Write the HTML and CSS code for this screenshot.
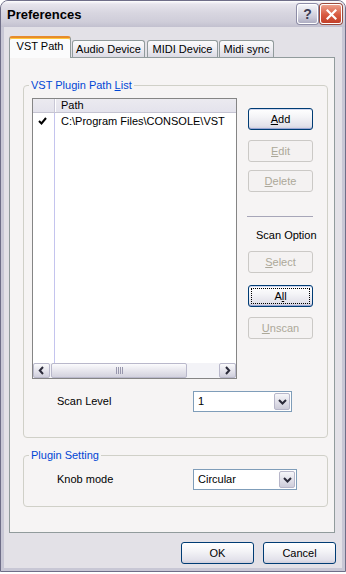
FILE: index.html
```html
<html>

<head>
  <meta charset="utf8">
  <title>Preferences</title>
  <link rel="stylesheet" href="styles.css">
</head>

<body>
  <div class="window">
    <div class="titlebar">
      <span class="title">Preferences</span>
      <span class="caption-btn help">?</span>
      <span class="caption-btn close">
        <svg width="11" height="11" viewBox="0 0 11 11"><path d="M1.5 1.5 L9.5 9.5 M9.5 1.5 L1.5 9.5" stroke="#fff" stroke-width="2.2" stroke-linecap="square"/></svg>
      </span>
    </div>

    <div class="client">
      <div class="tabs">
        <div class="tab active">VST Path</div>
        <div class="tab tab-audio">Audio Device</div>
        <div class="tab tab-midi">MIDI Device</div>
        <div class="tab tab-sync">Midi sync</div>
      </div>

      <div class="page">
        <fieldset class="group">
          <legend>VST Plugin Path <u>L</u>ist</legend>
          <div class="list-row">
            <div class="listview">
              <div class="list-header">
                <span class="col-check"></span>
                <span class="col-path">Path</span>
              </div>
              <div class="list-body">
                <span class="cell-check">
                  <svg width="9" height="8" viewBox="0 0 9 8"><path d="M1 4 L3.5 6.5 L8 1" fill="none" stroke="#000" stroke-width="2"/></svg>
                </span>
                <span class="cell-path">C:\Program Files\CONSOLE\VST</span>
              </div>
              <div class="hscroll">
                <span class="sb-btn">
                  <svg width="7" height="9" viewBox="0 0 7 9"><path d="M5 1 L1.8 4.5 L5 8" fill="none" stroke="#2b2b3a" stroke-width="2"/></svg>
                </span>
                <span class="sb-thumb"><span class="grip"></span></span>
                <span class="sb-track"></span>
                <span class="sb-btn">
                  <svg width="7" height="9" viewBox="0 0 7 9"><path d="M2 1 L5.2 4.5 L2 8" fill="none" stroke="#2b2b3a" stroke-width="2"/></svg>
                </span>
              </div>
            </div>

            <div class="side-buttons">
              <span class="btn default btn-add"><u>A</u>dd</span>
              <span class="btn disabled btn-edit"><u>E</u>dit</span>
              <span class="btn disabled btn-delete"><u>D</u>elete</span>
              <div class="separator"></div>
              <div class="scan-caption">Scan Option</div>
              <span class="btn disabled btn-select"><u>S</u>elect</span>
              <span class="btn default focus btn-all">A<u>l</u>l</span>
              <span class="btn disabled btn-unscan"><u>U</u>nscan</span>
            </div>
          </div>

          <div class="field-row scan-row">
            <span>Scan Level</span>
            <div class="combo combo-level">
              <span class="combo-text">1</span>
              <span class="combo-btn">
                <svg width="9" height="6" viewBox="0 0 9 6"><path d="M1 1 L4.5 4.5 L8 1" fill="none" stroke="#2b2b3a" stroke-width="2"/></svg>
              </span>
            </div>
          </div>
        </fieldset>

        <fieldset class="group plugin-group">
          <legend>Plugin Setting</legend>
          <div class="field-row">
            <span>Knob mode</span>
            <div class="combo combo-knob">
              <span class="combo-text">Circular</span>
              <span class="combo-btn">
                <svg width="9" height="6" viewBox="0 0 9 6"><path d="M1 1 L4.5 4.5 L8 1" fill="none" stroke="#2b2b3a" stroke-width="2"/></svg>
              </span>
            </div>
          </div>
        </fieldset>
      </div>

      <div class="dialog-buttons">
        <span class="btn">OK</span>
        <span class="btn">Cancel</span>
      </div>
    </div>
  </div>
</body>

</html>
```

FILE: styles.css
```css
body {
  margin: 0;
  background: #fff;
  font: 11px/13px "Liberation Sans", Arial, sans-serif;
  color: #000;
}

.window {
  width: 346px;
  height: 572px;
  box-sizing: border-box;
  display: flex;
  flex-direction: column;
  border: 1px solid #6f6e88;
  border-radius: 8px 8px 0 0;
  overflow: hidden;
  background: #c8c7d5;
}

/* caption */

.titlebar {
  flex: none;
  height: 26px;
  display: flex;
  align-items: center;
  padding: 0 3px 0 6px;
  background: linear-gradient(#ffffff 0, #e6e4ec 12%, #d8d6e0 45%, #cfcdd9 80%, #c2c0cf 100%);
}

.title {
  flex: 1;
  font: bold 13px "Liberation Sans", Arial, sans-serif;
  color: #000;
  padding-top: 1px;
}

.caption-btn {
  width: 21px;
  height: 20px;
  box-sizing: border-box;
  margin-left: 2px;
  border: 1px solid #fff;
  border-radius: 3px;
  display: flex;
  align-items: center;
  justify-content: center;
}

.help {
  background: linear-gradient(#f4f4f8, #c9c9d8 70%, #aeadc2);
  box-shadow: 0 0 0 1px #8d8ca6;
  font: bold 14px "Liberation Sans", Arial, sans-serif;
  color: #3d3c52;
}

.close {
  width: 22px;
  background: linear-gradient(#eca08c, #d85a40 55%, #c2402a);
  box-shadow: 0 0 0 1px #9a4a3c;
}

/* client area */

.client {
  flex: 1;
  margin: 0 3px 3px;
  padding: 9px 7px 0 5px;
  background: #e3e1e7;
}

.tabs {
  display: flex;
  align-items: flex-end;
  height: 21px;
}

.tab {
  height: 17px;
  box-sizing: border-box;
  border: 1px solid #919b9c;
  border-bottom: 0;
  border-radius: 3px 3px 0 0;
  background: linear-gradient(#fbfbfc, #eeedf2 50%, #dcdbe4);
  text-align: center;
  line-height: 17px;
}

.tab.active {
  position: relative;
  height: 22px;
  margin-bottom: -1px;
  width: 62px;
  border-top: 2px solid #e68b2c;
  box-shadow: inset 0 1px #ffc73c;
  background: #fbfbfc;
  line-height: 17px;
}

.tab-audio {
  width: 73px;
  margin-left: 1px;
}

.tab-midi {
  width: 71px;
  margin-left: 2px;
}

.tab-sync {
  width: 55px;
  margin-left: 1px;
}

.page {
  width: 326px;
  height: 476px;
  box-sizing: border-box;
  border: 1px solid #919b9c;
  padding: 21px 6px 0 13px;
  background: #f6f4f4;
}

/* group boxes */

.group {
  margin: 0;
  padding: 6px 8px 25px;
  border: 1px solid #d0d0c8;
  border-radius: 4px;
}

.group legend {
  padding: 0 2px;
  margin-left: -3px;
  color: #0046d5;
}

.plugin-group {
  margin-top: 11px;
  padding-top: 7px;
  padding-bottom: 16px;
}

.list-row {
  display: flex;
  align-items: flex-start;
}

/* list view */

.listview {
  width: 205px;
  height: 281px;
  box-sizing: border-box;
  border: 1px solid #858585;
  display: flex;
  flex-direction: column;
  background: #fff;
}

.list-header {
  flex: none;
  height: 14px;
  box-sizing: border-box;
  display: grid;
  grid-template-columns: 22px 1fr;
  border-bottom: 1px solid #c5c4d2;
  background: linear-gradient(#ebeaf0, #e4e3ec);
}

.col-check {
  border-right: 1px solid #c9c8d6;
  box-shadow: 1px 0 #fff;
}

.col-path {
  padding-left: 6px;
  line-height: 13px;
}

.list-body {
  flex: 1;
  display: grid;
  grid-template-columns: 22px 1fr;
  grid-auto-rows: 16px;
  align-content: start;
  background: linear-gradient(to right, #fff 21px, #c4c4ee 21px, #c4c4ee 22px, #fff 22px);
}

.cell-check {
  display: flex;
  align-items: center;
  padding-left: 5px;
}

.cell-path {
  padding-left: 6px;
  line-height: 16px;
}

.hscroll {
  flex: none;
  height: 15px;
  display: flex;
  background: #f3f3f7;
}

.sb-btn {
  width: 17px;
  box-sizing: border-box;
  border: 1px solid #b9b8cb;
  border-radius: 2px;
  background: linear-gradient(#fafafc, #dddce6 70%, #cfcedb);
  display: flex;
  align-items: center;
  justify-content: center;
}

.sb-thumb {
  width: 136px;
  margin-left: 1px;
  box-sizing: border-box;
  border: 1px solid #b9b8cb;
  border-radius: 2px;
  background: linear-gradient(#fbfbfd, #e3e2ea 60%, #d3d2de);
  display: flex;
  align-items: center;
  justify-content: center;
}

.grip {
  width: 7px;
  height: 7px;
  background: repeating-linear-gradient(to right, #9897ad 0, #9897ad 1px, transparent 1px, transparent 2px);
}

.sb-track {
  flex: 1;
}

/* buttons */

.btn {
  position: relative;
  display: flex;
  align-items: center;
  justify-content: center;
  width: 73px;
  height: 22px;
  box-sizing: border-box;
  border: 1px solid #003c74;
  border-radius: 3px;
  background: linear-gradient(#ffffff, #f4f4f7 40%, #e2e1ea 85%, #cfcedb);
}

.btn.default {
  box-shadow: inset 0 1px #cfd6ee, inset 0 -1px #9aa6d4;
}

.btn.focus::before {
  content: "";
  position: absolute;
  top: 2px;
  left: 2px;
  right: 2px;
  bottom: 2px;
  border: 1px dotted #000;
}

.btn.disabled {
  border-color: #cbc9c6;
  background: #f4f2f2;
  color: #aca899;
  box-shadow: none;
}

.side-buttons {
  margin-left: 11px;
  padding-top: 10px;
  width: 65px;
}

.side-buttons .btn {
  width: 65px;
}

.btn-edit {
  margin-top: 10px;
}

.btn-delete {
  margin-top: 8px;
}

.separator {
  margin: 24px 0 0 -1px;
  height: 1px;
  background: #a7a6b8;
}

.scan-caption {
  margin-top: 12px;
  padding-left: 8px;
  white-space: nowrap;
}

.btn-select {
  margin-top: 9px;
}

.btn-all {
  margin-top: 12px;
}

.btn-unscan {
  margin-top: 10px;
}

/* combo rows */

.field-row {
  display: grid;
  grid-template-columns: 136px auto;
  align-items: center;
  padding-left: 25px;
}

.scan-row {
  margin-top: 12px;
}

.combo {
  height: 21px;
  box-sizing: border-box;
  border: 1px solid #7f9db9;
  background: #fff;
  display: flex;
  align-items: center;
}

.combo-level {
  width: 99px;
}

.combo-knob {
  width: 104px;
}

.combo-text {
  flex: 1;
  padding-left: 4px;
}

.combo-btn {
  width: 16px;
  height: 17px;
  margin-right: 1px;
  box-sizing: border-box;
  border: 1px solid #b7b6c9;
  border-radius: 2px;
  background: linear-gradient(#f6f6f9, #dedde7 60%, #cdccd9);
  display: flex;
  align-items: center;
  justify-content: center;
}

.dialog-buttons {
  display: flex;
  justify-content: flex-end;
  gap: 9px;
  margin: 9px -1px 0 0;
}
```
